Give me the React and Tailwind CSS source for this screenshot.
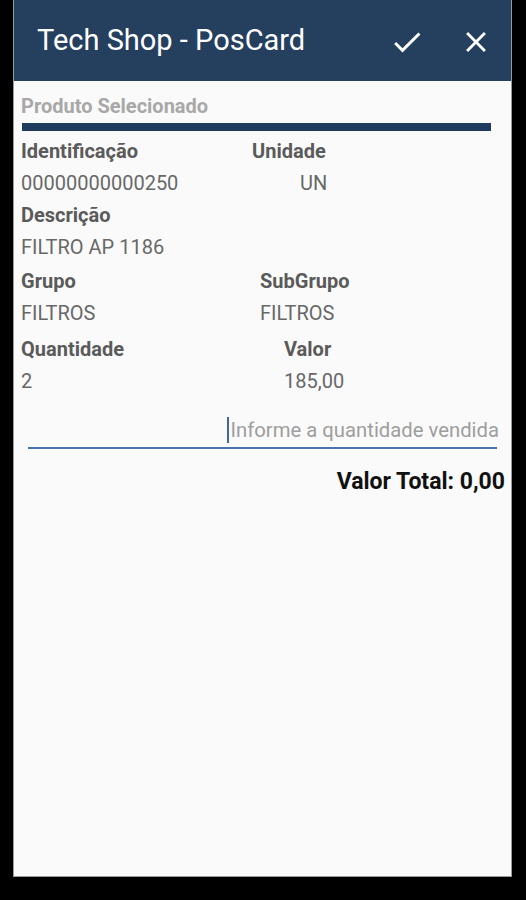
import React from "react";

const font = { fontFamily: "Roboto, 'Noto Sans', sans-serif" };

function CheckIcon() {
  return (
    <svg width="36" height="36" viewBox="0 0 24 24" fill="#fff">
      <path d="M9 16.17L4.83 12l-1.42 1.41L9 19 21 7l-1.41-1.41z" />
    </svg>
  );
}

function CloseIcon() {
  return (
    <svg width="34" height="34" viewBox="0 0 24 24" fill="#fff">
      <path d="M19 6.41L17.59 5 12 10.59 6.41 5 5 6.41 10.59 12 5 17.59 6.41 19 12 13.41 17.59 19 19 17.59 13.41 12z" />
    </svg>
  );
}

const Label = ({ children, className = "" }) => (
  <div className={`h-[32px] flex items-center text-[20px] font-bold text-[#5a5a5a] ${className}`}>{children}</div>
);
const Value = ({ children, className = "" }) => (
  <div className={`h-[32px] flex items-center text-[20px] text-[#686868] ${className}`}>{children}</div>
);

export default function App() {
  return (
    <div className="bg-black h-[900px] w-[526px] pl-[13px]" style={font}>
      <div className="w-[499px] h-[877px] bg-[#fafafa] border-x border-b border-[#9a9a9a] flex flex-col">
        <div className="h-[81px] bg-[#25405f] flex items-center pl-[23px] pr-[18px] shrink-0">
          <div className="text-white text-[29px] flex-1">Tech Shop - PosCard</div>
          <div className="flex items-center gap-[34px] mt-[2px]">
            <CheckIcon />
            <CloseIcon />
          </div>
        </div>

        <div className="pl-[7px] pr-[20px] pt-[9px]">
          <div className="h-[32px] flex items-center text-[20px] font-bold text-[#a8a8a8]">Produto Selecionado</div>
          <div className="mt-[1px] ml-[1px] h-[8px] bg-[#1e3a5c]" />

          <div className="mt-[4px] flex">
            <div className="w-[231px]">
              <Label>Identificação</Label>
              <Value>00000000000250</Value>
            </div>
            <div>
              <Label>Unidade</Label>
              <Value className="pl-[48px]">UN</Value>
            </div>
          </div>
          <Label>Descrição</Label>
          <Value>FILTRO AP 1186</Value>

          <div className="mt-[2px] flex">
            <div className="w-[239px]">
              <Label>Grupo</Label>
              <Value>FILTROS</Value>
            </div>
            <div>
              <Label>SubGrupo</Label>
              <Value>FILTROS</Value>
            </div>
          </div>

          <div className="mt-[4px] flex">
            <div className="w-[263px]">
              <Label>Quantidade</Label>
              <Value>2</Value>
            </div>
            <div>
              <Label>Valor</Label>
              <Value>185,00</Value>
            </div>
          </div>
        </div>

        <div className="mt-[18px] ml-[14px] mr-[14px]">
          <div className="h-[34px] flex items-center justify-end border-b-2 border-[#4a74ad] pb-[2px]">
            <span className="w-[2px] h-[26px] bg-[#3f67a5] mr-[1px]" />
            <span className="text-[20.3px] text-[#9e9e9e] -mr-[2px]">Informe a quantidade vendida</span>
          </div>
        </div>

        <div className="mt-[16px] pr-[6px] text-right text-[23px] font-bold text-[#111]">Valor Total: 0,00</div>
      </div>
    </div>
  );
}
